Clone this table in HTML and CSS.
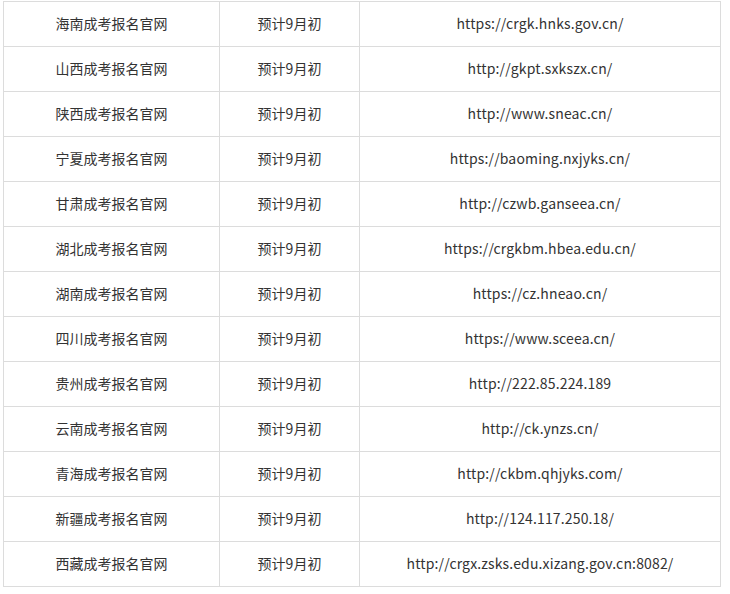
FILE: index.html
```html
<!DOCTYPE html>
<html lang="zh-CN">
<head>
<meta charset="utf-8">
<title>成考报名官网</title>
<link rel="stylesheet" href="styles.css">
</head>
<body>
<div class="wrap">
<table class="sites">
<tbody>
<tr><td>海南成考报名官网</td><td>预计9月初</td><td>https://crgk.hnks.gov.cn/</td></tr>
<tr><td>山西成考报名官网</td><td>预计9月初</td><td>http://gkpt.sxkszx.cn/</td></tr>
<tr><td>陕西成考报名官网</td><td>预计9月初</td><td>http://www.sneac.cn/</td></tr>
<tr><td>宁夏成考报名官网</td><td>预计9月初</td><td>https://baoming.nxjyks.cn/</td></tr>
<tr><td>甘肃成考报名官网</td><td>预计9月初</td><td>http://czwb.ganseea.cn/</td></tr>
<tr><td>湖北成考报名官网</td><td>预计9月初</td><td>https://crgkbm.hbea.edu.cn/</td></tr>
<tr><td>湖南成考报名官网</td><td>预计9月初</td><td>https://cz.hneao.cn/</td></tr>
<tr><td>四川成考报名官网</td><td>预计9月初</td><td>https://www.sceea.cn/</td></tr>
<tr><td>贵州成考报名官网</td><td>预计9月初</td><td>http://222.85.224.189</td></tr>
<tr><td>云南成考报名官网</td><td>预计9月初</td><td>http://ck.ynzs.cn/</td></tr>
<tr><td>青海成考报名官网</td><td>预计9月初</td><td>http://ckbm.qhjyks.com/</td></tr>
<tr><td>新疆成考报名官网</td><td>预计9月初</td><td>http://124.117.250.18/</td></tr>
<tr><td>西藏成考报名官网</td><td>预计9月初</td><td>http://crgx.zsks.edu.xizang.gov.cn:8082/</td></tr>
</tbody>
</table>
</div>
</body>
</html>
```

FILE: styles.css
```css
html, body {
  margin: 0;
  padding: 0;
  background: #fff;
}
.wrap {
  padding: 1px 0 0 3px;
}
.sites {
  border-collapse: collapse;
  width: 718px;
  table-layout: fixed;
  font-family: "Noto Sans CJK SC", "Noto Sans", sans-serif;
  font-size: 14px;
  color: #333;
}
.sites tr {
  height: 45px;
}
.sites td {
  border: 1px solid #dcdcdc;
  padding: 0 0 2px;
  text-align: center;
  vertical-align: middle;
  line-height: 20px;
}
.sites td:nth-child(1) { width: 215px; }
.sites td:nth-child(2) { width: 139px; }
.sites td:nth-child(3) { letter-spacing: 0.15px; }
```
